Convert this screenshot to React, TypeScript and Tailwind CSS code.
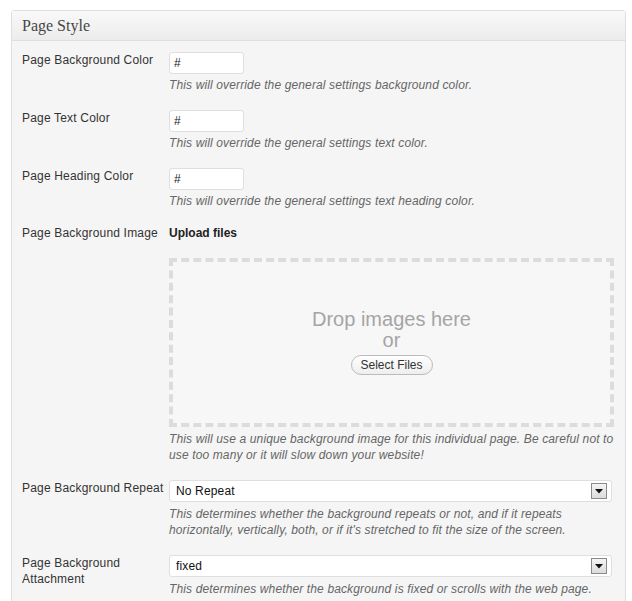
import React from "react";

const Label = ({ children }: { children: React.ReactNode }) => (
  <div className="w-[147px] shrink-0 pr-[2px] text-[12px] leading-[16px] tracking-[0.18px] text-[#333]">{children}</div>
);

const Desc = ({ children, className = "" }: { children: React.ReactNode; className?: string }) => (
  <p className={"text-[12px] leading-[16px] italic tracking-[0.13px] text-[#666] " + className}>{children}</p>
);

const TextInput = () => (
  <div className="flex h-[22px] w-[75px] items-center rounded-[3px] border border-[#dfdfdf] bg-white pl-[4px] text-[12px] text-[#222]">
    #
  </div>
);

const Select = ({ value }: { value: string }) => (
  <div className="flex h-[22px] w-[443px] items-center justify-between rounded-[3px] border border-[#dfdfdf] bg-white pl-[6px] pr-[4px] text-[12px] tracking-[0.15px] text-[#111]">
    <span>{value}</span>
    <div className="flex h-[16px] w-[16px] items-center justify-center border border-[#8a8a8a] bg-gradient-to-b from-[#f4f4f4] to-[#dcdcdc]">
      <svg width="8" height="5" viewBox="0 0 8 5">
        <polygon points="0,0 8,0 4,4.5" fill="#111" />
      </svg>
    </div>
  </div>
);

export default function App() {
  return (
    <div className="min-h-[601px] bg-white pl-[11px] pr-[6px] pt-[10px]" style={{ fontFamily: '"Liberation Sans", Arial, sans-serif' }}>
      <div className="rounded-t-[3px] border border-[#dfdfdf] bg-[#f5f5f5]">
        <div className="flex h-[30px] items-center border-b border-[#dfdfdf] bg-gradient-to-b from-[#f9f9f9] to-[#ececec] pl-[10px]">
          <h3 className="text-[16px] leading-none text-[#464646]" style={{ fontFamily: '"Liberation Serif", "Times New Roman", serif' }}>
            Page Style
          </h3>
        </div>
        <div className="flex flex-col gap-[17px] pb-[20px] pl-[10px] pr-[11px] pt-[11px]">
          <div className="flex">
            <Label>Page Background Color</Label>
            <div className="flex flex-col gap-[3px]">
              <TextInput />
              <Desc>This will override the general settings background color.</Desc>
            </div>
          </div>
          <div className="flex">
            <Label>Page Text Color</Label>
            <div className="flex flex-col gap-[3px]">
              <TextInput />
              <Desc>This will override the general settings text color.</Desc>
            </div>
          </div>
          <div className="flex">
            <Label>Page Heading Color</Label>
            <div className="flex flex-col gap-[3px]">
              <TextInput />
              <Desc>This will override the general settings text heading color.</Desc>
            </div>
          </div>
          <div className="-mt-[1px] flex">
            <Label>Page Background Image</Label>
            <div className="flex flex-1 flex-col">
              <div className="text-[12px] font-bold leading-[16px] text-[#222]">Upload files</div>
              <div className="mt-[17px] flex h-[169px] flex-col items-center justify-center border-4 border-dashed border-[#dcdcdc] bg-[#f7f7f7] pb-[1px]">
                <div className="text-[20px] leading-[21px] text-[#a5a5a5]">Drop images here</div>
                <div className="text-[20px] leading-[21px] text-[#a5a5a5]">or</div>
                <div className="mt-[4px] flex h-[20px] w-[82px] items-center justify-center rounded-full border border-[#bbb] bg-gradient-to-b from-white to-[#eee] text-[12px] text-[#333]">
                  Select Files
                </div>
              </div>
              <Desc className="-mr-[8px] mt-[4px]">
                This will use a unique background image for this individual page. Be careful not to use too many or it will slow down your website!
              </Desc>
            </div>
          </div>
          <div className="flex">
            <Label>Page Background Repeat</Label>
            <div className="flex flex-1 flex-col gap-[4px]">
              <Select value="No Repeat" />
              <Desc>
                This determines whether the background repeats or not, and if it repeats horizontally, vertically, both, or if it's stretched to fit the size of the screen.
              </Desc>
            </div>
          </div>
          <div className="flex">
            <Label>Page Background Attachment</Label>
            <div className="flex flex-1 flex-col gap-[4px]">
              <Select value="fixed" />
              <Desc>This determines whether the background is fixed or scrolls with the web page.</Desc>
            </div>
          </div>
        </div>
      </div>
    </div>
  );
}
